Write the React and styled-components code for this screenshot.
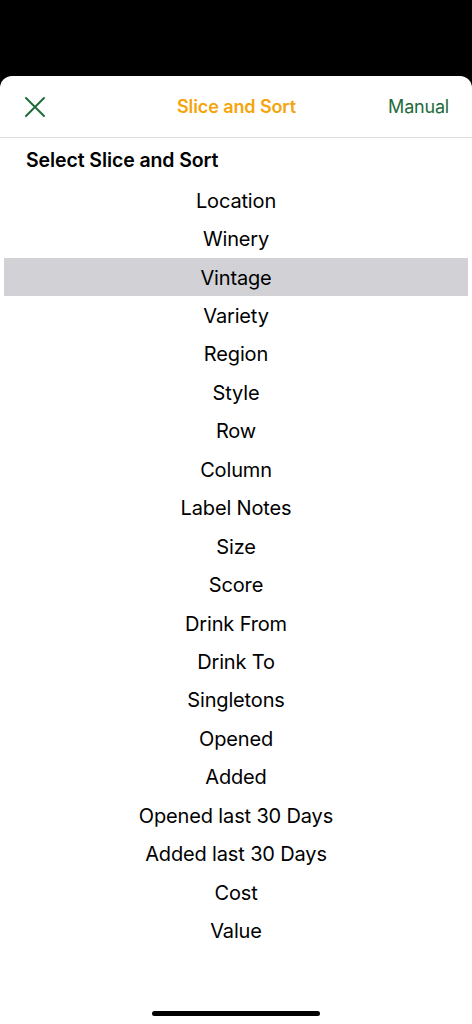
import styled, { createGlobalStyle } from 'styled-components';

const GlobalStyle = createGlobalStyle`
  html, body {
    margin: 0;
    padding: 0;
    background: #000;
  }
  body {
    font-family: Inter, "Noto Sans", "Liberation Sans", sans-serif;
    -webkit-font-smoothing: antialiased;
  }
`;

const Screen = styled.div`
  width: 472px;
  height: 1024px;
  background: #000;
  padding-top: 76px;
  box-sizing: border-box;
  display: flex;
  flex-direction: column;
`;

const Sheet = styled.div`
  flex: 1;
  background: #fff;
  border-radius: 12px 12px 0 0;
  display: flex;
  flex-direction: column;
  overflow: hidden;
`;

const Header = styled.div`
  height: 62px;
  display: grid;
  grid-template-columns: 1fr auto 1fr;
  align-items: center;
  padding: 0 23px 0 24px;
  box-sizing: border-box;
  border-bottom: 1px solid #dcdcdc;
`;

const CloseButton = styled.button`
  justify-self: start;
  background: none;
  border: none;
  padding: 0;
  width: 22px;
  height: 22px;
  display: flex;
  color: #1f6b3b;
`;

const Title = styled.div`
  color: #f5a40c;
  font-size: 18px;
  font-weight: 600;
  letter-spacing: -0.1px;
`;

const Manual = styled.div`
  justify-self: end;
  color: #1f6b3b;
  font-size: 18px;
  letter-spacing: -0.2px;
`;

const SectionTitle = styled.div`
  height: 43px;
  display: flex;
  align-items: center;
  padding: 1px 0 0 26px;
  box-sizing: border-box;
  font-size: 19.5px;
  font-weight: 600;
  color: #000;
  letter-spacing: -0.1px;
`;

const List = styled.div`
  display: flex;
  flex-direction: column;
  padding: 0 4px;
`;

const Item = styled.div`
  height: 38.45px;
  display: flex;
  align-items: center;
  justify-content: center;
  padding-top: 1px;
  box-sizing: border-box;
  font-size: 20px;
  color: #000;
  letter-spacing: -0.15px;
  background: ${p => (p.selected ? '#d1d1d6' : 'transparent')};
`;

const Spacer = styled.div`
  flex: 1;
`;

const HomeBar = styled.div`
  width: 168px;
  height: 5px;
  border-radius: 3px;
  background: #000;
  align-self: center;
  margin-bottom: 8px;
`;

const items = [
  'Location', 'Winery', 'Vintage', 'Variety', 'Region', 'Style', 'Row',
  'Column', 'Label Notes', 'Size', 'Score', 'Drink From', 'Drink To',
  'Singletons', 'Opened', 'Added', 'Opened last 30 Days',
  'Added last 30 Days', 'Cost', 'Value',
];

export default function App() {
  return (
    <>
      <GlobalStyle />
      <Screen>
        <Sheet>
          <Header>
            <CloseButton aria-label="Close">
              <svg width="22" height="22" viewBox="0 0 22 22" fill="none" stroke="currentColor" strokeWidth="2" strokeLinecap="round">
                <path d="M2 2 L20 20 M20 2 L2 20" />
              </svg>
            </CloseButton>
            <Title>Slice and Sort</Title>
            <Manual>Manual</Manual>
          </Header>
          <SectionTitle>Select Slice and Sort</SectionTitle>
          <List>
            {items.map(name => (
              <Item key={name} selected={name === 'Vintage'}>{name}</Item>
            ))}
          </List>
          <Spacer />
          <HomeBar />
        </Sheet>
      </Screen>
    </>
  );
}
